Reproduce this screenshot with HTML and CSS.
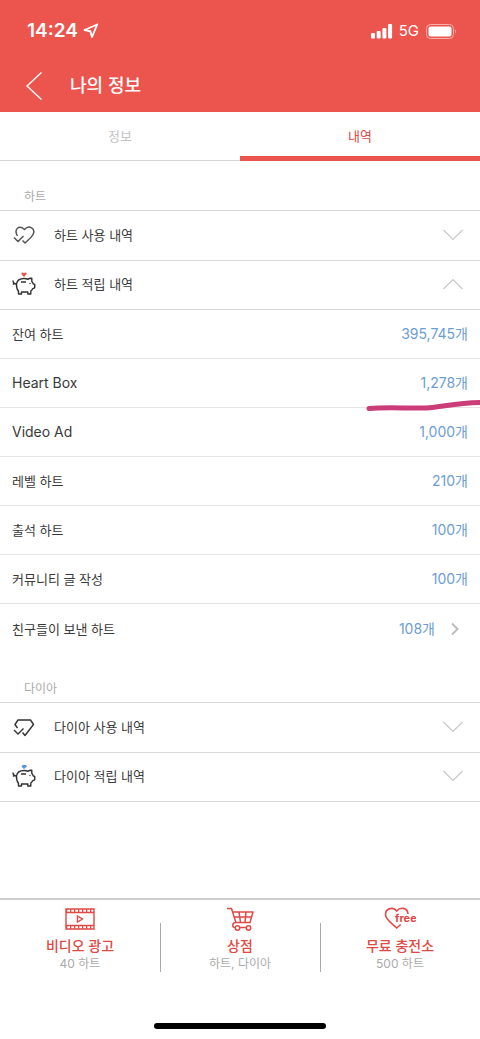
FILE: index.html
```html
<!DOCTYPE html>
<html lang="ko">
<head>
<meta charset="utf-8">
<meta name="viewport" content="width=device-width, initial-scale=1">
<title>나의 정보</title>
<link rel="stylesheet" href="styles.css">
</head>
<body>
<svg class="defs" aria-hidden="true">
  <symbol id="down" viewBox="0 0 22 12"><path d="M1.500 1l9.500 9.500L20.500 1" fill="none" stroke="currentColor" stroke-width="1.200"/></symbol>
  <symbol id="up" viewBox="0 0 22 12"><path d="M1.500 11L11 1.500l9.500 9.500" fill="none" stroke="currentColor" stroke-width="1.200"/></symbol>
  <symbol id="pig" viewBox="0 0 24 24"><path d="M1 8.500c0 2.500 1 3.500 3.500 3.500C5 8.500 8 6.500 12 6.500c2 0 3 .2 4 .8 1-.9 2.200-1.100 3.800-1v3.200c.8.800 1.200 1.400 1.400 2.300l1.500.7v3.300l-1.900.8c-.4 1-1.100 1.800-2 2.400v3h-3v-2H9.500v2h-3v-2.800C5 17.500 4.300 15 4.500 12M2.500 11L1 12.500M9 10h5" fill="none" stroke="#303030" stroke-width="1.400" stroke-linejoin="round"/><circle cx="18" cy="11.500" r=".7" fill="#303030"/></symbol>
</svg>
<header class="top">
  <div class="status">
    <span class="time">14:24</span>
    <svg class="arrow" width="16" height="16" viewBox="0 0 16 16"><path d="M14.200 1.500L1.500 7l5.800 1.200L9 14z" fill="none" stroke="#fff" stroke-width="1.900" stroke-linejoin="round"/></svg>
    <svg class="signal" width="22" height="15" viewBox="0 0 22 15" fill="#fff"><rect y="9" width="4" height="5.500" rx="1"/><rect x="5.700" y="7" width="4" height="7.500" rx="1"/><rect x="11.400" y="4" width="4" height="10.500" rx="1"/><rect x="17.100" y="0" width="4" height="14.500" rx="1"/></svg>
    <span class="network">5G</span>
    <svg width="31" height="15" viewBox="0 0 31 15"><rect x=".5" y=".5" width="27" height="14" rx="4" fill="none" stroke="#f7b0aa"/><rect x="2.500" y="2.500" width="23" height="10" rx="2" fill="#fff"/><path d="M29 5.500c1.500.5 1.500 3.500 0 4z" fill="#f7b0aa"/></svg>
  </div>
  <div class="bar">
    <button class="back" aria-label="뒤로"><svg width="18" height="30" viewBox="0 0 18 30"><path d="M16.500 1.500L2 15l14.500 13.500" fill="none" stroke="#fff" stroke-width="1.400"/></svg></button>
    <h1 class="title">나의 정보</h1>
  </div>
</header>
<nav class="tabs">
  <button class="tab">정보</button>
  <button class="tab tab-on">내역</button>
</nav>
<main class="content">
  <section>
    <h2 class="section-title">하트</h2>
    <button class="toggle">
      <svg class="icon" width="24" height="24" viewBox="0 0 24 24" fill="none" stroke="#555" stroke-width="1.500" stroke-linejoin="round"><path d="M5.500 13C1.500 6 7 1.500 12.500 6.500 17 1.500 24 5.500 21 11.500c-1.500 3-5 5.500-8 8.500l-2.500-2.500M2 14.500l4 4 5.500-5.500"/></svg>
      <span class="toggle-label">하트 사용 내역</span><svg class="chev" width="22" height="12"><use href="#down"/></svg>
    </button>
    <button class="toggle" aria-expanded="true">
      <svg class="icon" width="24" height="24" viewBox="0 0 24 24"><use href="#pig"/><path d="M12 5L9.500 2.300C9 .5 11 0 12 1.300c1-1.300 3-.8 2.500 1z" fill="#e9544f"/></svg>
      <span class="toggle-label">하트 적립 내역</span><svg class="chev" width="22" height="12"><use href="#up"/></svg>
    </button>
    <dl class="list">
      <div class="row"><dt>잔여 하트</dt><dd>395,745개</dd></div>
      <div class="row marked"><dt lang="en">Heart Box</dt><dd>1,278개</dd><svg class="mark" width="115" height="14" viewBox="0 0 115 14"><path d="M4 9.500C22 8 43 9.500 61 9c17-1 28-5 54-5.500" fill="none" stroke="#ca3d78" stroke-width="5" stroke-linecap="round"/></svg></div>
      <div class="row"><dt lang="en">Video Ad</dt><dd>1,000개</dd></div>
      <div class="row"><dt>레벨 하트</dt><dd>210개</dd></div>
      <div class="row"><dt>출석 하트</dt><dd>100개</dd></div>
      <div class="row"><dt>커뮤니티 글 작성</dt><dd>100개</dd></div>
      <div class="row"><dt>친구들이 보낸 하트</dt><dd>108개</dd><svg class="next" width="10" height="14" viewBox="0 0 10 14"><path d="M2 1.500L7.500 7 2 12.500" fill="none" stroke="#bcbcbc" stroke-width="2"/></svg></div>
    </dl>
  </section>
  <section>
    <h2 class="section-title">다이아</h2>
    <button class="toggle">
      <svg class="icon" width="24" height="24" viewBox="0 0 24 24" fill="none" stroke="#333" stroke-width="1.400" stroke-linejoin="round"><path d="M5.500 13L3 9.500l3-4.500h12.500L21.500 9.500 13 20.500 10.500 17.500M2 15l4 4 5.500-5.500"/></svg>
      <span class="toggle-label">다이아 사용 내역</span><svg class="chev" width="22" height="12"><use href="#down"/></svg>
    </button>
    <button class="toggle">
      <svg class="icon" width="24" height="24" viewBox="0 0 24 24"><use href="#pig"/><path d="M10.500 1h3.500l1 1.500L12 5 9.500 2.500z" fill="#5b95d6"/></svg>
      <span class="toggle-label">다이아 적립 내역</span><svg class="chev" width="22" height="12"><use href="#down"/></svg>
    </button>
  </section>
</main>
<footer class="dock">
  <nav class="actions">
    <a class="action" href="#video">
      <svg width="30" height="24" viewBox="0 0 30 24" fill="none" stroke="#e04a45" stroke-width="1.400"><path d="M1 2h28v20H1zM1 5.500h28M1 18.500h28M12.500 9l5 3-5 3z"/><path d="M1 3.700h28M1 20.300h28" stroke-width="3" stroke-dasharray="1.300 2.700"/></svg>
      <strong>비디오 광고</strong><small>40 하트</small>
    </a>
    <a class="action" href="#shop">
      <svg width="28" height="24" viewBox="0 0 28 24" fill="none" stroke="#e04a45" stroke-width="1.500" stroke-linejoin="round"><path d="M1 1.500h4.500L10 16M6.500 5H27l-3 10.500H9.500M8 10h17.500M13 5l1.500 10.500M20 5l-1 10.500M10 15.500c-4 0-4.500 5-1 5h15"/><circle cx="11.500" cy="21" r="2.200" fill="#fff"/><circle cx="22.500" cy="21" r="2.200" fill="#fff"/></svg>
      <strong>상점</strong><small>하트, 다이아</small>
    </a>
    <a class="action" href="#free">
      <svg width="32" height="24" viewBox="0 0 32 24"><path d="M24 7C23.500 0 16 0 12.700 4 9.500-.5 1.500 1 1.500 7.500c0 5 6.500 9 11.200 13.500l4-3.500" fill="none" stroke="#e04a45" stroke-width="1.600"/><text class="free" x="11" y="15">free</text></svg>
      <strong>무료 충전소</strong><small>500 하트</small>
    </a>
  </nav>
  <div class="home"></div>
</footer>
</body>
</html>
```
FILE: styles.css
```css
* { box-sizing: border-box; }
body {
  margin: 0;
  min-height: 100vh;
  display: flex;
  flex-direction: column;
  background: #fff;
  color: #3a3a3a;
  font: 13px/20px Inter, "Noto Sans CJK KR", sans-serif;
}
button { margin: 0; padding: 0; border: 0; background: none; color: inherit; font: inherit; }
h1, h2, dl, dd { margin: 0; font-weight: 400; }
svg { flex: none; }
.defs { position: absolute; width: 0; height: 0; }
.top { background: #ec544e; color: #fff; }
.status { display: flex; align-items: center; height: 60px; padding: 2px 23px 0 27px; }
.time { font-size: 19px; font-weight: 600; }
.arrow { margin-left: 5px; }
.signal { margin-left: auto; }
.network { margin: 0 7px 0 6px; font-size: 15px; }
.bar { display: flex; align-items: center; height: 52px; padding-left: 25px; }
.back { display: flex; width: 45px; }
.title { font-size: 18px; font-weight: 500; }
.tabs { display: grid; grid-template-columns: 1fr 1fr; height: 49px; }
.tab { border-bottom: 1px solid #d4d4d4; color: #c4c4c4; }
.tab-on { border-bottom: 5px solid #e9544f; padding-top: 4px; color: #e04a45; }
.section-title { height: 50px; padding: 26px 24px 0; border-bottom: 1px solid #d6d6d6; color: #aaa; font-size: 12px; }
.toggle { display: flex; align-items: center; width: 100%; height: 50px; padding: 0 16px 2px 12px; border-bottom: 1px solid #d8d8d8; text-align: left; }
.toggle:last-of-type { height: 49px; }
.toggle-label { flex: 1; margin-left: 18px; }
.chev { color: #c8c8c8; }
.row { display: flex; align-items: center; height: 49px; padding: 0 12px; border-bottom: 1px solid #e4e4e4; }
.row:last-child { border-bottom: 0; }
.row dt:lang(en) { font-size: 14px; }
.row dd { margin-left: auto; color: #6c9dd3; font-size: 14px; }
.marked { position: relative; }
.mark { position: absolute; right: 0; bottom: -6px; }
.next { margin: 0 8px 0 15px; }
.dock { margin-top: auto; border-top: 2px solid #cfcfcf; }
.actions { display: grid; grid-template-columns: 1fr 1fr 1fr; padding-top: 7px; }
.action { position: relative; display: flex; flex-direction: column; align-items: center; color: #e04a45; text-decoration: none; }
.action + .action::before { content: ""; position: absolute; left: 0; top: 16px; bottom: 0; border-left: 1px solid #aaa; }
.action strong { margin-top: 5px; font-size: 14px; font-weight: 500; line-height: 20px; }
.action small { color: #aaa; font-size: 12px; line-height: 16px; }
.free { fill: #e04a45; font: 700 11px Inter, sans-serif; }
.home { width: 172px; height: 6px; margin: 51px auto 10px; border-radius: 3px; background: #000; }
```
